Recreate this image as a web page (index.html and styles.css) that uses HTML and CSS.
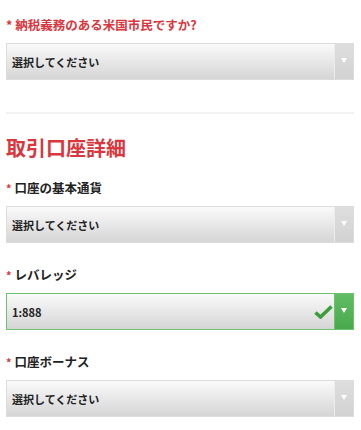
FILE: index.html
```html
<!DOCTYPE html>
<html lang="ja">
<head>
    <meta charset="UTF-8">
    <meta name="viewport" content="width=device-width, initial-scale=1.0">
    <title>取引口座詳細</title>
    <link rel="stylesheet" href="styles.css">
</head>
<body>
    <div class="form">
        <!-- 米国市民の確認 -->
        <div class="field">
            <div class="field-label label-alert"><span class="req">*</span> 納税義務のある米国市民ですか?</div>
            <div class="select-box">
                <span class="select-value">選択してください</span>
                <span class="select-arrow"></span>
            </div>
        </div>

        <div class="divider"></div>

        <h2 class="section-title">取引口座詳細</h2>

        <div class="field">
            <div class="field-label"><span class="req">*</span> 口座の基本通貨</div>
            <div class="select-box">
                <span class="select-value">選択してください</span>
                <span class="select-arrow"></span>
            </div>
        </div>

        <div class="field">
            <div class="field-label"><span class="req">*</span> レバレッジ</div>
            <div class="select-box is-valid">
                <span class="select-value">1:888</span>
                <svg class="select-check" width="19" height="14" viewBox="0 0 19 14">
                    <path d="M1.5 7.5 L6.5 12 L17.5 1.5" fill="none" stroke="#3c9e3f" stroke-width="3.6"/>
                </svg>
                <span class="select-arrow"></span>
            </div>
        </div>

        <div class="field">
            <div class="field-label"><span class="req">*</span> 口座ボーナス</div>
            <div class="select-box">
                <span class="select-value">選択してください</span>
                <span class="select-arrow"></span>
            </div>
        </div>
    </div>
</body>
</html>
```

FILE: styles.css
```css
/* Estilos generales */
body {
    margin: 0;
    padding: 0;
    background-color: #fff;
    font-family: "Noto Sans CJK JP", "Noto Sans", sans-serif;
    color: #222;
}
.form {
    padding: 17px 7px 0 6px;
}
/* Campos */
.field {
    margin-bottom: 24px;
}
.field-label {
    font-size: 12.5px;
    font-weight: bold;
    line-height: 16px;
    margin-bottom: 10px;
}
.field-label .req {
    color: #d9363e;
    font-size: 11px;
}
.label-alert {
    color: #d9363e;
}
.label-alert .req {
    font-size: 12.5px;
}
/* Desplegable */
.select-box {
    display: flex;
    align-items: center;
    height: 35px;
    border: 1px solid #dcdcdc;
    background: linear-gradient(#fafafa, #d5d5d5);
}
.select-value {
    flex: 1;
    padding-left: 5px;
    font-size: 11px;
    font-weight: bold;
    color: #222;
}
.select-arrow {
    position: relative;
    width: 18px;
    height: 100%;
    border-left: 1px solid #ececec;
    background: linear-gradient(#dedede, #d2d2d2);
}
.select-arrow::after {
    content: "";
    position: absolute;
    left: 6px;
    top: 14px;
    border-left: 3px solid transparent;
    border-right: 3px solid transparent;
    border-top: 5px solid #fff;
}
.select-check {
    margin-right: 1px;
}
/* Estado válido */
.select-box.is-valid {
    border-color: #6cc26f;
}
.select-box.is-valid .select-arrow {
    border-left-color: #6cc26f;
    background: linear-gradient(#62bd65, #49a84c);
}
/* Separador y título */
.divider {
    height: 2px;
    background-color: #f3f3f3;
    margin: 32px 0 20px;
}
.section-title {
    margin: 0 0 18px;
    font-size: 20px;
    line-height: 28px;
    font-weight: bold;
    color: #d9363e;
}
```
